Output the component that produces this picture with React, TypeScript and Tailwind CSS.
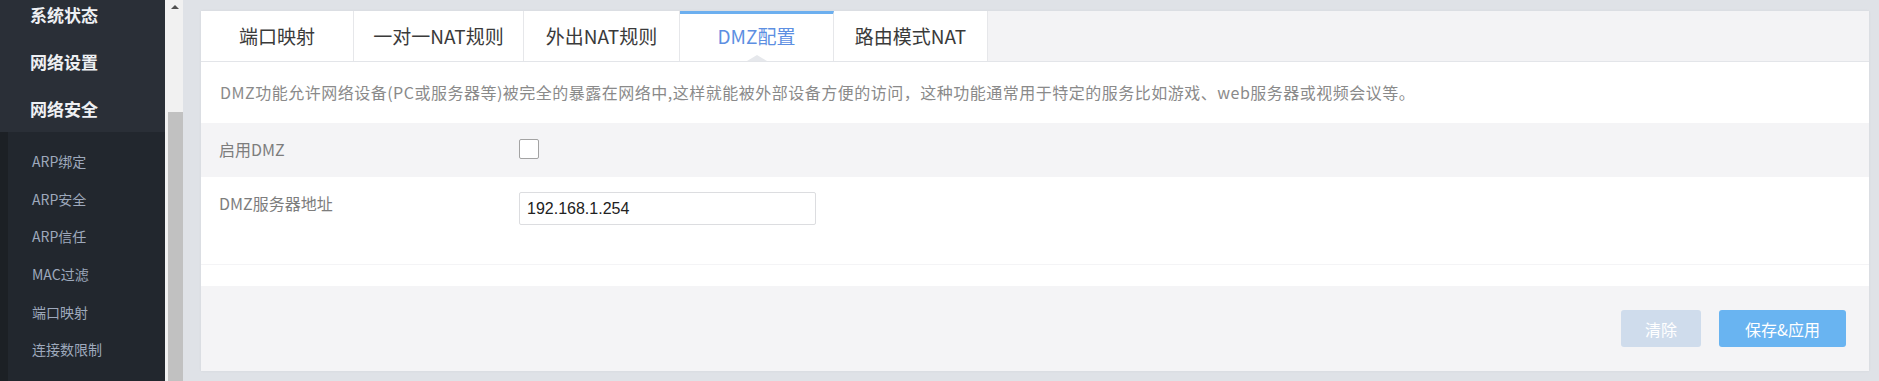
import React from 'react'

const topMenus = ['系统状态', '网络设置', '网络安全']
const subMenus = ['ARP绑定', 'ARP安全', 'ARP信任', 'MAC过滤', '端口映射', '连接数限制']

const tabs = [
  { label: '端口映射', w: 'w-[153px]' },
  { label: '一对一NAT规则', w: 'w-[170px]' },
  { label: '外出NAT规则', w: 'w-[156px]' },
  { label: 'DMZ配置', w: 'w-[154px]', active: true },
  { label: '路由模式NAT', w: 'w-[154px]' },
]

function Sidebar() {
  return (
    <aside className="w-[165px] shrink-0 flex flex-col bg-[#22272e]">
      <div className="h-[132px] bg-[#2a2f37] overflow-hidden">
        <div className="-mt-[9px] flex flex-col">
          {topMenus.map((m) => (
            <div key={m} className="h-[47px] flex items-center pl-[30px] text-[17px] font-bold text-[#eef0f3]">
              {m}
            </div>
          ))}
        </div>
      </div>
      <div className="flex flex-1">
        <div className="w-[8px] bg-[#1c2025]" />
        <ul className="flex-1 pt-[11px]">
          {subMenus.map((m) => (
            <li key={m} className="h-[37.6px] flex items-center pl-[24px] text-[14px] text-[#9ea9bc]">
              {m}
            </li>
          ))}
        </ul>
      </div>
    </aside>
  )
}

function Scrollbar() {
  return (
    <div className="w-[18px] shrink-0 flex flex-col bg-[#f1f1f1]">
      <div className="h-[112px] flex justify-center pt-[5px] pl-[2px]">
        <div className="w-0 h-0 border-x-[4px] border-x-transparent border-b-[4px] border-b-[#505050]" />
      </div>
      <div className="flex-1 ml-[3px] bg-[#c1c1c1]" />
    </div>
  )
}

export default function App() {
  return (
    <div className="flex h-[381px] w-[1879px] overflow-hidden bg-[#dfe2e7] font-['Noto_Sans_CJK_SC','Noto_Sans',sans-serif]">
      <Sidebar />
      <Scrollbar />
      <main className="flex-1 pl-[18px] pt-[11px] pr-[10px] pb-[10px]">
        <div className="h-full flex flex-col bg-white shadow-[0_0_3px_rgba(0,0,0,0.05)]">
          {/* tabs */}
          <div className="h-[51px] flex bg-[#f3f3f5] border-b border-[#e3e5e9]">
            {tabs.map((t) => (
              <div
                key={t.label}
                className={`${t.w} relative flex items-center justify-center bg-white border-r border-[#e6e7ea] text-[19px] ${
                  t.active ? 'border-t-[3px] border-t-[#6cafef] text-[#5d8fe2] pb-[3px]' : 'text-[#3a3a3a]'
                }`}
              >
                {t.label}
                {t.active && (
                  <span className="absolute bottom-0 left-1/2 -translate-x-1/2 w-0 h-0 border-x-[10px] border-x-transparent border-b-[6px] border-b-[#e6e8ec]" />
                )}
              </div>
            ))}
          </div>

          <div className="h-[61px] flex items-center pb-[2px] px-[19px] text-[16px] tracking-[0.5px] text-[#8a8a8a]">
            DMZ功能允许网络设备(PC或服务器等)被完全的暴露在网络中,这样就能被外部设备方便的访问，这种功能通常用于特定的服务比如游戏、web服务器或视频会议等。
          </div>

          <div className="h-[54px] flex items-center pb-[2px] bg-[#f4f4f6]">
            <div className="w-[318px] pl-[18px] text-[16px] text-[#7d7d7d]">启用DMZ</div>
            <div className="w-[20px] h-[20px] bg-white border border-[#a3a3a3] rounded-[2px]" />
          </div>

          <div className="h-[87px] flex items-start bg-white">
            <div className="w-[318px] pl-[18px] pt-[14px] text-[16px] text-[#7d7d7d]">DMZ服务器地址</div>
            <div className="mt-[15px] w-[297px] h-[33px] flex items-center px-[7px] border border-[#dcdde0] rounded-[2px] text-[16px] text-[#222] font-['Liberation_Sans',sans-serif]">
              192.168.1.254
            </div>
          </div>

          <div className="h-[22px] border-t border-[#f4f4f6]" />

          <div className="flex-1 flex justify-end items-start gap-[18px] pt-[24px] pr-[23px] bg-[#f4f4f6]">
            <button className="w-[80px] h-[37px] rounded-[3px] bg-[#cfdcec] text-white text-[16px]">清除</button>
            <button className="w-[127px] h-[37px] rounded-[3px] bg-[#69b4f1] text-white text-[16px]">保存&amp;应用</button>
          </div>
        </div>
      </main>
    </div>
  )
}
